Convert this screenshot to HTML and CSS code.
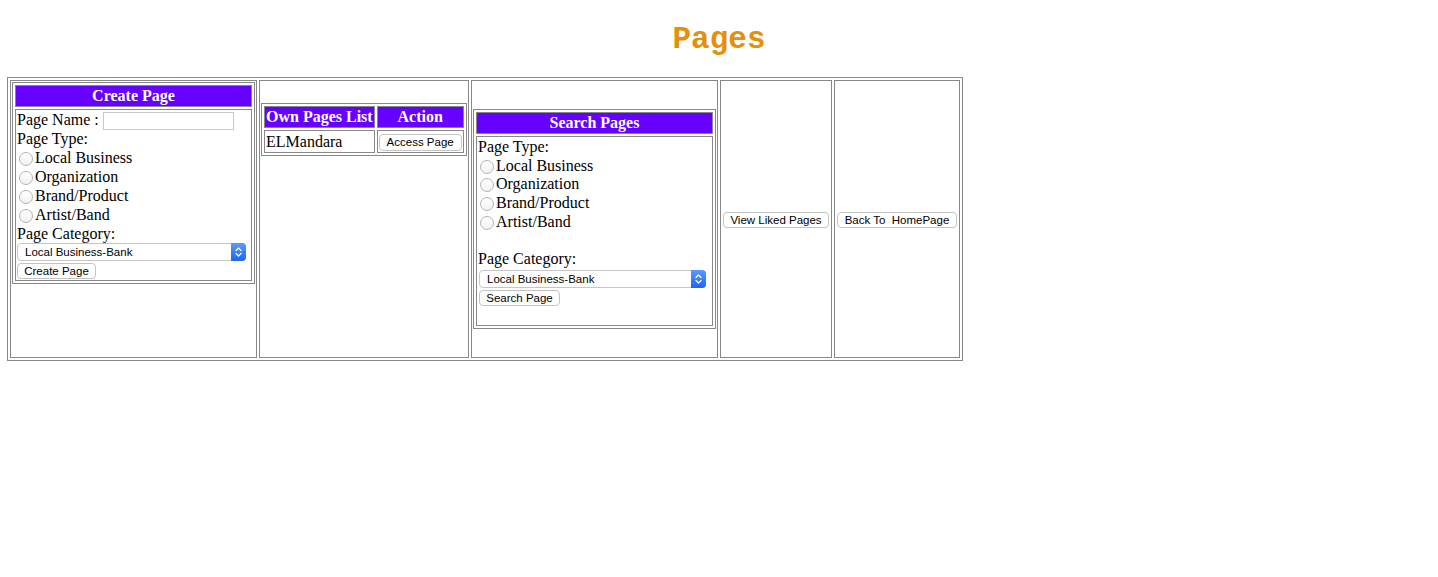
FILE: index.html
```html
<!DOCTYPE html>
<html lang="en">
<head>
<meta charset="utf-8">
<title>Pages</title>
<link rel="stylesheet" href="styles.css">
</head>
<body>
<h1 class="title">Pages</h1>
<table class="layout">
  <tr>
    <td class="cell cell-create">
      <table class="panel panel-full">
        <tr><th class="panel-head">Create Page</th></tr>
        <tr>
          <td class="panel-body">
            <div class="name-line">Page Name : <input type="text" class="text-input"></div>
            <div class="line">Page Type:</div>
            <label class="line"><input type="radio" name="ctype" class="radio">Local Business</label>
            <label class="line"><input type="radio" name="ctype" class="radio">Organization</label>
            <label class="line"><input type="radio" name="ctype" class="radio">Brand/Product</label>
            <label class="line"><input type="radio" name="ctype" class="radio">Artist/Band</label>
            <div class="line">Page Category:</div>
            <div class="select-wrap select-create">
              <select class="select"><option>Local Business-Bank</option></select>
              <span class="select-arrow"><svg width="15" height="18" viewBox="0 0 15 18"><defs><linearGradient id="g1" x1="0" y1="0" x2="0" y2="1"><stop offset="0" stop-color="#5a9bff"/><stop offset="1" stop-color="#1f63f5"/></linearGradient></defs><path d="M0 0H11A4 4 0 0 1 15 4V14A4 4 0 0 1 11 18H0Z" fill="url(#g1)"/><path d="M5 7.5L7.5 5L10 7.5M5 10.5L7.5 13L10 10.5" fill="none" stroke="#fff" stroke-width="1.3" stroke-linecap="round" stroke-linejoin="round"/></svg></span>
            </div>
            <button class="btn btn-create">Create Page</button>
          </td>
        </tr>
      </table>
    </td>
    <td class="cell cell-own">
      <table class="panel panel-own">
        <tr><th class="panel-head">Own Pages List</th><th class="panel-head">Action</th></tr>
        <tr>
          <td class="own-name">ELMandara</td>
          <td class="own-action"><button class="btn btn-access">Access Page</button></td>
        </tr>
      </table>
    </td>
    <td class="cell cell-search">
      <table class="panel panel-full">
        <tr><th class="panel-head">Search Pages</th></tr>
        <tr>
          <td class="panel-body search-body">
            <div class="line">Page Type:</div>
            <label class="line"><input type="radio" name="stype" class="radio">Local Business</label>
            <label class="line"><input type="radio" name="stype" class="radio">Organization</label>
            <label class="line"><input type="radio" name="stype" class="radio">Brand/Product</label>
            <label class="line"><input type="radio" name="stype" class="radio">Artist/Band</label>
            <div class="line"></div>
            <div class="line">Page Category:</div>
            <div class="select-wrap select-search">
              <select class="select"><option>Local Business-Bank</option></select>
              <span class="select-arrow"><svg width="15" height="18" viewBox="0 0 15 18"><defs><linearGradient id="g2" x1="0" y1="0" x2="0" y2="1"><stop offset="0" stop-color="#5a9bff"/><stop offset="1" stop-color="#1f63f5"/></linearGradient></defs><path d="M0 0H11A4 4 0 0 1 15 4V14A4 4 0 0 1 11 18H0Z" fill="url(#g2)"/><path d="M5 7.5L7.5 5L10 7.5M5 10.5L7.5 13L10 10.5" fill="none" stroke="#fff" stroke-width="1.3" stroke-linecap="round" stroke-linejoin="round"/></svg></span>
            </div>
            <button class="btn btn-search">Search Page</button>
            <div class="line"></div>
          </td>
        </tr>
      </table>
    </td>
    <td class="cell cell-liked"><button class="btn btn-liked">View Liked Pages</button></td>
    <td class="cell cell-home"><button class="btn btn-home">Back To&nbsp; HomePage</button></td>
  </tr>
</table>
</body>
</html>
```
FILE: styles.css
```css
html, body {
  background: #ffffff;
}
body {
  margin: 0 7px;
  font-family: "Liberation Serif", "Times New Roman", serif;
  font-size: 16px;
  color: #000;
}
.title {
  margin: 21px 0 18px;
  height: 38px;
  line-height: 38px;
  text-align: center;
  font-family: "Liberation Mono", "Courier New", monospace;
  font-weight: bold;
  font-size: 31px;
  color: #e3900a;
}
.layout {
  border: 1px solid #888;
  border-collapse: separate;
  border-spacing: 2px;
}
.cell {
  box-sizing: border-box;
  height: 278px;
  border: 1px solid #888;
  padding: 1px;
  vertical-align: top;
}
.cell-create { width: 247px; }
.cell-own { width: 210px; }
.cell-search { width: 247px; }
.cell-liked { width: 112px; vertical-align: middle; text-align: center; }
.cell-home { width: 126px; vertical-align: middle; text-align: center; }

.panel {
  border: 1px solid #888;
  border-collapse: separate;
  border-spacing: 2px;
}
.panel-full { width: 100%; }
.cell-own .panel { margin-top: 21px; }
.cell-search .panel { margin-top: 27px; }

.panel-head {
  background: #6600ff;
  color: #fff;
  font-weight: bold;
  border: 1px solid #888;
  padding: 1px;
  line-height: 18px;
  text-align: center;
  white-space: nowrap;
}
.panel-body {
  border: 1px solid #888;
  padding: 1px;
  text-align: left;
}
.name-line {
  height: 18px;
  line-height: 18px;
  white-space: nowrap;
}
.text-input {
  box-sizing: border-box;
  width: 131px;
  height: 18px;
  margin: 1px 0 0;
  padding: 0 3px;
  border: 1px solid #c8c8c8;
  vertical-align: top;
  font-size: 11px;
}
.line {
  display: block;
  height: 19px;
  line-height: 19px;
  white-space: nowrap;
}
.search-body .line {
  height: 18.67px;
  line-height: 18.67px;
}
.radio {
  appearance: none;
  -webkit-appearance: none;
  box-sizing: border-box;
  width: 14px;
  height: 14px;
  margin: 0 2px 0 2px;
  border: 1px solid #b4b4b4;
  border-radius: 50%;
  background: linear-gradient(#ffffff, #f1f1f1);
  vertical-align: -3px;
}
.select-wrap {
  position: relative;
  height: 18px;
}
.select-create { width: 229px; }
.select-search { width: 227px; margin: 1px 0 0 1px; }
.select {
  appearance: none;
  -webkit-appearance: none;
  box-sizing: border-box;
  width: 100%;
  height: 18px;
  margin: 0;
  padding: 0 20px 0 7px;
  border: 1px solid #c6c6c6;
  border-radius: 4px;
  background: #fff;
  font-family: "Liberation Sans", Arial, sans-serif;
  font-size: 11.5px;
  color: #000;
  display: block;
}
.select-arrow {
  position: absolute;
  top: 0;
  right: 0;
  width: 15px;
  height: 18px;
  line-height: 0;
}
.btn {
  box-sizing: border-box;
  height: 16px;
  padding: 0;
  border: 1px solid #c4c4c4;
  border-radius: 4px;
  background: #fff;
  font-family: "Liberation Sans", Arial, sans-serif;
  font-size: 11.5px;
  line-height: 14px;
  color: #000;
  white-space: nowrap;
}
.btn-create { display: block; width: 79px; margin: 2px 0 0; }
.btn-search { display: block; width: 81px; margin: 2px 0 0 1px; }
.btn-access { width: 83px; height: 17px; line-height: 15px; vertical-align: middle; }
.btn-liked { width: 106px; }
.btn-home { width: 120px; }

.own-name {
  border: 1px solid #888;
  padding: 1px;
  line-height: 19px;
}
.own-action {
  border: 1px solid #888;
  padding: 1px;
  line-height: 17px;
  text-align: center;
}
```
